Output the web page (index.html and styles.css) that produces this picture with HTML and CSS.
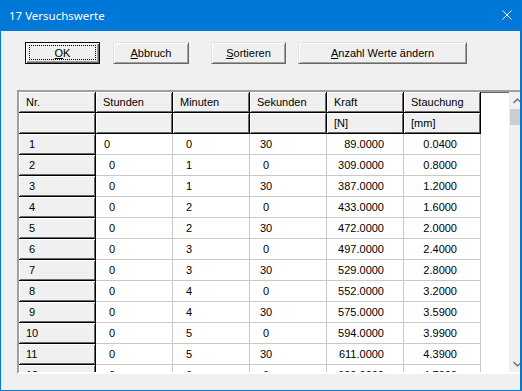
FILE: index.html
```html
<!DOCTYPE html>
<html lang="de">
<head>
    <meta charset="UTF-8">
    <title>17 Versuchswerte</title>
    <link rel="stylesheet" href="styles.css">
</head>
<body>
    <div class="window">
        <div class="titlebar">
            <span class="title">17 Versuchswerte</span>
            <svg class="close" width="10" height="10" viewBox="0 0 10 10">
                <path d="M0.5 0.5 L9.5 9.5 M9.5 0.5 L0.5 9.5" stroke="#fff" stroke-width="1"/>
            </svg>
        </div>
        <div class="client">
            <div class="toolbar">
                <button class="btn btn-default btn-ok"><span class="focus"><u>O</u>K</span></button>
                <button class="btn btn-cancel"><u>A</u>bbruch</button>
                <button class="btn btn-sort"><u>S</u>ortieren</button>
                <button class="btn btn-count"><u>A</u>nzahl Werte ändern</button>
            </div>

            <div class="grid-frame">
                <div class="grid">
                    <div class="hd">Nr.</div>
                    <div class="hd">Stunden</div>
                    <div class="hd">Minuten</div>
                    <div class="hd">Sekunden</div>
                    <div class="hd">Kraft</div>
                    <div class="hd">Stauchung</div>

                    <div class="hd"></div>
                    <div class="hd"></div>
                    <div class="hd"></div>
                    <div class="hd"></div>
                    <div class="hd">[N]</div>
                    <div class="hd">[mm]</div>

                    <div class="hd nr">&nbsp;1</div><div class="c edit">0</div><div class="c">&nbsp;0</div><div class="c">30</div><div class="c num">89.0000</div><div class="c num2">0.0400</div>
                    <div class="hd nr">&nbsp;2</div><div class="c">&nbsp;0</div><div class="c">&nbsp;1</div><div class="c">&nbsp;0</div><div class="c num">309.0000</div><div class="c num2">0.8000</div>
                    <div class="hd nr">&nbsp;3</div><div class="c">&nbsp;0</div><div class="c">&nbsp;1</div><div class="c">30</div><div class="c num">387.0000</div><div class="c num2">1.2000</div>
                    <div class="hd nr">&nbsp;4</div><div class="c">&nbsp;0</div><div class="c">&nbsp;2</div><div class="c">&nbsp;0</div><div class="c num">433.0000</div><div class="c num2">1.6000</div>
                    <div class="hd nr">&nbsp;5</div><div class="c">&nbsp;0</div><div class="c">&nbsp;2</div><div class="c">30</div><div class="c num">472.0000</div><div class="c num2">2.0000</div>
                    <div class="hd nr">&nbsp;6</div><div class="c">&nbsp;0</div><div class="c">&nbsp;3</div><div class="c">&nbsp;0</div><div class="c num">497.0000</div><div class="c num2">2.4000</div>
                    <div class="hd nr">&nbsp;7</div><div class="c">&nbsp;0</div><div class="c">&nbsp;3</div><div class="c">30</div><div class="c num">529.0000</div><div class="c num2">2.8000</div>
                    <div class="hd nr">&nbsp;8</div><div class="c">&nbsp;0</div><div class="c">&nbsp;4</div><div class="c">&nbsp;0</div><div class="c num">552.0000</div><div class="c num2">3.2000</div>
                    <div class="hd nr">&nbsp;9</div><div class="c">&nbsp;0</div><div class="c">&nbsp;4</div><div class="c">30</div><div class="c num">575.0000</div><div class="c num2">3.5900</div>
                    <div class="hd nr">10</div><div class="c">&nbsp;0</div><div class="c">&nbsp;5</div><div class="c">&nbsp;0</div><div class="c num">594.0000</div><div class="c num2">3.9900</div>
                    <div class="hd nr">11</div><div class="c">&nbsp;0</div><div class="c">&nbsp;5</div><div class="c">30</div><div class="c num">611.0000</div><div class="c num2">4.3900</div>
                    <div class="hd nr">12</div><div class="c">&nbsp;0</div><div class="c">&nbsp;6</div><div class="c">&nbsp;0</div><div class="c num">622.0000</div><div class="c num2">4.7900</div>
                </div>
                <div class="scrollbar">
                    <div class="arrow">
                        <svg width="9" height="6" viewBox="0 0 9 6"><path d="M0.5 5 L4.5 1 L8.5 5" fill="none" stroke="#606060" stroke-width="1.2"/></svg>
                    </div>
                    <div class="thumb"></div>
                    <div class="track"></div>
                    <div class="arrow">
                        <svg width="9" height="6" viewBox="0 0 9 6"><path d="M0.5 1 L4.5 5 L8.5 1" fill="none" stroke="#606060" stroke-width="1.2"/></svg>
                    </div>
                </div>
            </div>
        </div>
    </div>
</body>
</html>
```

FILE: styles.css
```css
* {
    box-sizing: border-box;
}

body {
    margin: 0;
    font-family: "Liberation Sans", Arial, sans-serif;
    font-size: 11px;
    color: #000;
}

.window {
    width: 522px;
    height: 391px;
    display: flex;
    flex-direction: column;
    background: #0078d7;
}

.titlebar {
    height: 31px;
    flex: none;
    display: flex;
    align-items: center;
    padding-left: 9px;
    color: #fff;
    font-family: "Noto Sans", sans-serif;
    font-size: 11.5px;
}

.title {
    flex: 1;
    margin-top: -1px;
}

.close {
    margin-right: 10px;
    margin-top: -1px;
}

.client {
    flex: 1;
    margin: 0 2px 1px 1px;
    background: #f0f0f0;
    overflow: hidden;
    padding-top: 11px;
}

.toolbar {
    display: flex;
    padding-left: 24px;
    height: 22px;
}

.btn {
    height: 22px;
    padding: 0;
    font-family: inherit;
    font-size: 11px;
    color: #000;
    background: #f0f0f0;
    border: 1px solid;
    border-color: #e3e3e3 #696969 #696969 #e3e3e3;
    box-shadow: inset 1px 1px #fff, inset -1px -1px #a0a0a0;
}

.btn-default {
    border-color: #000;
    box-shadow: inset 1px 1px #fff, inset -1px -1px #696969, inset -2px -2px #a0a0a0;
    padding: 2px 3px 3px 3px;
}

.focus {
    display: flex;
    align-items: center;
    justify-content: center;
    height: 100%;
    border: 1px dotted #000;
}

.btn-ok {
    width: 75px;
}

.btn-cancel {
    width: 76px;
    margin-left: 13px;
}

.btn-sort {
    width: 75px;
    margin-left: 22px;
}

.btn-count {
    width: 169px;
    margin-left: 12px;
}

.grid-frame {
    display: flex;
    width: 511px;
    height: 284px;
    margin: 26px 0 0 16px;
    background: #fff;
    border: 2px solid;
    border-color: #a0a0a0 #fff #fff #a0a0a0;
    box-shadow: inset 1px 1px #696969;
}

.grid {
    display: grid;
    grid-template-columns: repeat(6, 77px);
    grid-auto-rows: 21px;
    align-content: start;
    width: 462px;
    overflow: hidden;
}

.hd,
.c {
    line-height: 20px;
    white-space: nowrap;
}

.hd {
    background: #f0f0f0;
    padding-left: 7px;
    border-right: 1px solid #000;
    border-bottom: 1px solid #000;
    box-shadow: inset 1px 1px #fff, inset -1px -1px #696969;
}

.nr {
    padding-left: 7px;
}

.c {
    background: #fff;
    padding-left: 10px;
    border-right: 1px solid #c8c8c8;
    border-bottom: 1px solid #c8c8c8;
}

.c.edit {
    padding-left: 8px;
}

.c.num {
    text-align: right;
    padding-right: 19px;
}

.c.num2 {
    text-align: right;
    padding-right: 23px;
}

.scrollbar {
    margin-left: auto;
    width: 17px;
    display: flex;
    flex-direction: column;
    background: #f0f0f0;
}

.arrow {
    height: 17px;
    display: flex;
    align-items: center;
    justify-content: center;
}

.thumb {
    height: 16px;
    margin: 0 1px;
    background: #cdcdcd;
}

.track {
    flex: 1;
}
```
